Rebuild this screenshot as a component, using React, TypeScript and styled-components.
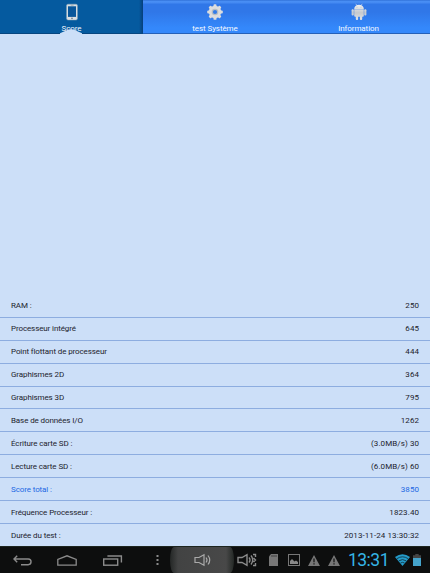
import React from "react";
import styled, { createGlobalStyle } from "styled-components";

const GlobalStyle = createGlobalStyle`
  * { box-sizing: border-box; }
  body { margin: 0; background: #ccdff8; font-family: Roboto, "Noto Sans", sans-serif; }
`;

const Screen = styled.main`
  display: flex;
  flex-direction: column;
  width: 430px;
  height: 573px;
  overflow: hidden;
  background: #ccdff8;
`;

const TabBar = styled.nav`
  display: grid;
  grid-template-columns: 143px 144px 143px;
  height: 34px;
  flex: none;
`;

const Tab = styled.div<{ $active?: boolean }>`
  position: relative;
  display: flex;
  flex-direction: column;
  align-items: center;
  height: 33.5px;
  padding-top: 3px;
  color: #f4f8ff;
  font-size: 8px;
  letter-spacing: -0.08px;
  line-height: 10px;
  border-bottom: 1px solid ${(p) => (p.$active ? "#064680" : "#2460b8")};
  background: ${(p) =>
    p.$active
      ? "linear-gradient(90deg, transparent 139px, #063f7c 143px), #055a9f"
      : "linear-gradient(#2867cf 0, #4a90f5 1px, #4489f2 3px, #3077e8 4px, #3077e8 12px, #3488fb 28px, #3488fb 100%)"};
`;

const TabIcon = styled.svg`
  display: block;
  width: 18px;
  height: 18px;
  flex: none;
`;

const TabLabel = styled.span`
  margin-top: 3px;
  white-space: nowrap;
`;

const Pointer = styled.svg`
  position: absolute;
  left: 60px;
  bottom: -1px;
  width: 22px;
  height: 5px;
`;

const Results = styled.section`
  flex: 1;
  display: flex;
  flex-direction: column;
  justify-content: flex-end;
`;

const Row = styled.div<{ $accent?: boolean }>`
  display: flex;
  justify-content: space-between;
  align-items: center;
  height: 22.92px;
  flex: none;
  padding: 1px 11px 0;
  line-height: 10px;
  color: ${(p) => (p.$accent ? "#1c68e4" : "#1d232d")};
  border-bottom: 1px solid #8dade0;
  &:last-child { height: 22px; border-bottom: 0; }
`;

const Label = styled.span`
  font-size: 8px;
  letter-spacing: -0.11px;
`;

const Value = styled.span`
  font-size: 8px;
  letter-spacing: 0.09px;
  margin-right: -0.09px;
`;

const SystemBar = styled.footer`
  display: grid;
  grid-template-columns: 44px 46px 45px 35px 64px 26px 27px 14px 26px 14px 1px 52px 16px 13px;
  align-items: center;
  justify-items: center;
  height: 27px;
  flex: none;
  color: #8b8b8b;
  background: #0d0e0e;
  border-top: 1px solid #1d251f;
`;

const MenuSlot = styled.div`
  padding-left: 9px;
`;

const VolumeButton = styled.div`
  display: flex;
  align-items: center;
  justify-content: center;
  width: 64px;
  height: 26px;
  background: linear-gradient(90deg, #242726, #424343 8px, #484848 56px, #242926);
  border-radius: 4px / 13px;
`;

const Glyph = styled.svg<{ $w: number; $h: number }>`
  display: block;
  width: ${(p) => p.$w}px;
  height: ${(p) => p.$h}px;
  overflow: visible;
`;

const Clock = styled.time`
  color: #35b5e6;
  font-size: 17.5px;
  font-weight: 400;
  line-height: 20px;
  letter-spacing: -0.5px;
  padding-left: 1px;
  white-space: nowrap;
`;

type Result = { label: string; value: string; accent?: boolean };

const results: Result[] = [
  { label: "RAM :", value: "250" },
  { label: "Processeur intégré", value: "645" },
  { label: "Point flottant de processeur", value: "444" },
  { label: "Graphismes 2D", value: "364" },
  { label: "Graphismes 3D", value: "795" },
  { label: "Base de données I/O", value: "1262" },
  { label: "Écriture carte SD :", value: "(3.0MB/s) 30" },
  { label: "Lecture carte SD :", value: "(6.0MB/s) 60" },
  { label: "Score total :", value: "3850", accent: true },
  { label: "Fréquence Processeur :", value: "1823.40" },
  { label: "Durée du test :", value: "2013-11-24 13:30:32" },
];

const Warning = () => (
  <Glyph $w={12} $h={11} viewBox="0 0 12 11">
    <path d="M6 0 12 11H0Z" fill="#777" />
    <path d="M6 3.5v3.7M6 8.2v1.3" stroke="#171717" strokeWidth="1.3" />
  </Glyph>
);

export default function App() {
  return (
    <>
      <GlobalStyle />
      <Screen>
        <TabBar>
          <Tab $active>
            <TabIcon viewBox="0 0 18 18">
              <rect x="3.6" y="1.2" width="10.8" height="15.8" rx="1.4" fill="#d9dfe3" stroke="#8fa8bb" strokeWidth=".5" />
              <rect x="5" y="3.3" width="8" height="10.6" fill="#07569b" />
              <path d="M7.8 2.2h2.8" stroke="#8a9398" strokeWidth=".6" />
              <circle cx="9" cy="15.4" r=".8" fill="#687c8b" />
            </TabIcon>
            <TabLabel>Score</TabLabel>
            <Pointer viewBox="0 0 22 5" preserveAspectRatio="none"><path d="M0 4.2 8.5 .6Q11 -.3 13.5 .6L22 4.2V5H0Z" fill="#ccdff8" /></Pointer>
          </Tab>
          <Tab>
            <TabIcon viewBox="0 0 18 18">
              <g fill="#dcddde">
                <circle cx="9" cy="9" r="6.2" />
                {[0, 45, 90, 135].map((a) => (
                  <rect key={a} x="7.5" y="1.2" width="3" height="15.6" rx=".9" transform={`rotate(${a} 9 9)`} />
                ))}
              </g>
              <circle cx="9" cy="9" r="3.3" fill="#b6bdc3" />
              <circle cx="9" cy="9" r="2.1" fill="#327ce8" />
            </TabIcon>
            <TabLabel>test Système</TabLabel>
          </Tab>
          <Tab>
            <TabIcon viewBox="0 0 18 18">
              <defs>
                <linearGradient id="robot" gradientUnits="userSpaceOnUse" x1="0" y1="1" x2="0" y2="17">
                  <stop stopColor="#f4f4f4" /><stop offset=".55" stopColor="#c6c9cd" /><stop offset="1" stopColor="#e2e5e8" />
                </linearGradient>
              </defs>
              <g fill="url(#robot)">
                <path d="M4.2 6C4.2 3.3 6.1 1.7 9 1.7s4.8 1.6 4.8 4.3Z" />
                <path d="M4.2 6.2h9.6v6.5q0 1-1 1H5.2q-1 0-1-1Z" />
                <rect x="1.6" y="6.2" width="2.2" height="6.3" rx="1" />
                <rect x="14.2" y="6.2" width="2.2" height="6.3" rx="1" />
                <rect x="5.8" y="12" width="2.3" height="5" rx="1" />
                <rect x="9.9" y="12" width="2.3" height="5" rx="1" />
              </g>
              <path d="m5.8 .8 1 1.6M12.2 .8l-1 1.6" stroke="#e5e8ec" strokeWidth=".6" />
              <circle cx="7" cy="4.1" r=".4" fill="#6687ae" /><circle cx="11" cy="4.1" r=".4" fill="#6687ae" />
            </TabIcon>
            <TabLabel>Information</TabLabel>
          </Tab>
        </TabBar>
        <Results>
          {results.map((r) => (
            <Row key={r.label} $accent={r.accent}>
              <Label>{r.label}</Label>
              <Value>{r.value}</Value>
            </Row>
          ))}
        </Results>
        <SystemBar>
          <Glyph $w={19} $h={11} viewBox="0 0 19 11" fill="none" stroke="currentColor" strokeWidth="1.4">
            <path d="M4.2.8 1 4l3.2 3.2M1 4h14.2c3.8 0 3.8 5.7 0 5.7H8" />
          </Glyph>
          <Glyph $w={20} $h={11} viewBox="0 0 20 11" fill="none" stroke="currentColor" strokeWidth="1.3">
            <path d="M.8 10.2V4.5L10 .8l9.2 3.7v5.7Z" />
          </Glyph>
          <Glyph $w={19} $h={11} viewBox="0 0 19 11" fill="none" stroke="currentColor" strokeWidth="1.4">
            <rect x=".7" y="4" width="14" height="6.2" /><path d="M4.4 1h14v6.4" />
          </Glyph>
          <MenuSlot>
            <Glyph $w={3} $h={10} viewBox="0 0 3 10" fill="currentColor">
              <path d="M.5 0h2v2h-2zM.5 4h2v2h-2zM.5 8h2v2h-2z" />
            </Glyph>
          </MenuSlot>
          <VolumeButton>
            <Glyph $w={17} $h={12} viewBox="0 0 17 12" fill="none" stroke="#aaa" strokeWidth="1.2">
              <path d="M1 3.5h4L10 .7v10.6L5 8.5H1ZM12 3.5q2 2.5 0 5M14 1.5q3.5 4.5 0 9" />
            </Glyph>
          </VolumeButton>
          <Glyph $w={20} $h={12} viewBox="0 0 20 12" fill="none" stroke="currentColor" strokeWidth="1.4">
            <path d="M1 3.5h4L10 .7v10.6L5 8.5H1ZM12 3.5q2 2.5 0 5M14 1.5q3.5 4.5 0 9M16 .5h2.5v2.5M16.5 4l2 2-2 2M18.5 9v2.5H16" />
          </Glyph>
          <Glyph $w={9} $h={12} viewBox="0 0 9 12">
            <path d="M2 0h7v12H0V2.5Z" fill="#777" /><path d="M3 1v2M5 1v2M7 1v2" stroke="#333" strokeWidth=".8" />
          </Glyph>
          <Glyph $w={12} $h={12} viewBox="0 0 12 12">
            <rect x=".5" y=".5" width="11" height="11" fill="none" stroke="#777" />
            <path d="M2 10V7l2-2 2.5 2.5L8 6.5 10 8v2Z" fill="#888" />
          </Glyph>
          <Warning />
          <Warning />
          <span />
          <Clock>13:31</Clock>
          <Glyph $w={15} $h={12} viewBox="0 0 15 12">
            <path d="M0 3Q7.5-2.5 15 3L7.5 12Z" fill="#249bc9" />
            <path d="M2 4.6q5.5-3.6 11 0M3.8 6.8q3.7-2.4 7.4 0M5.5 9q2-1.3 4 0" fill="none" stroke="#123746" strokeWidth=".9" />
          </Glyph>
          <Glyph $w={8} $h={12} viewBox="0 0 8 12">
            <path d="M2.3 0h3.4v1.3H8V12H0V1.3h2.3Z" fill="#444" /><path d="M0 4h8v8H0Z" fill="#45a4cc" />
          </Glyph>
        </SystemBar>
      </Screen>
    </>
  );
}
